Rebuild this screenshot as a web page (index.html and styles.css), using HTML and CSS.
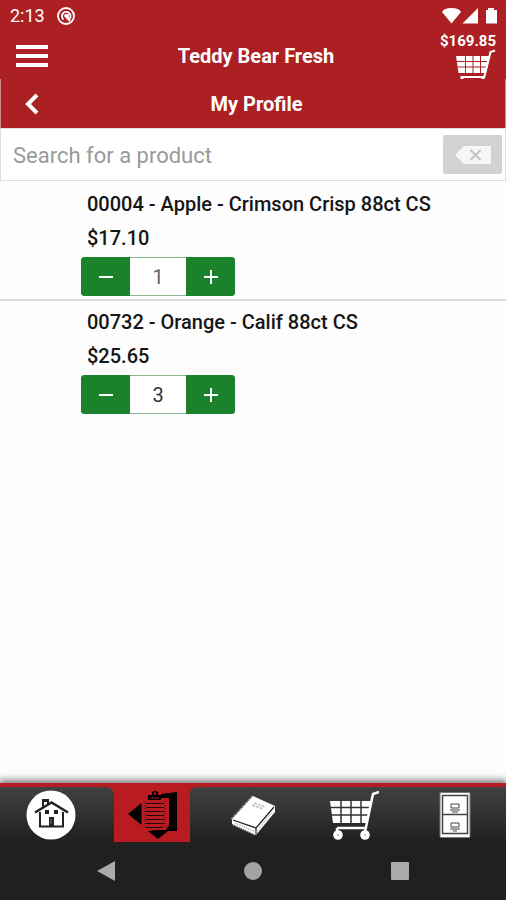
FILE: index.html
```html
<!DOCTYPE html>
<html lang="en">
<head>
<meta charset="utf-8">
<meta name="viewport" content="width=device-width, initial-scale=1">
<title>Teddy Bear Fresh</title>
<link rel="stylesheet" href="styles.css">
</head>
<body>
<svg class="sprite" aria-hidden="true">
  <symbol id="minus" viewBox="0 0 16 16"><path d="M1 8H15" stroke="currentColor" stroke-width="2"/></symbol>
  <symbol id="plus" viewBox="0 0 16 16"><path d="M1 8H15M8 1V15" stroke="currentColor" stroke-width="2"/></symbol>
</svg>
<header class="top">
  <div class="status">
    <span class="time">2:13</span>
    <svg width="18" height="18" viewBox="0 0 18 18" fill="none" stroke="#fff"><circle cx="9" cy="9" r="8" stroke-width="1.800"/><path d="M6.500 12.500A4.300 4.300 0 1 1 12.500 12" stroke-width="1.800"/><path d="M7.500 8L13 14" stroke-width="2"/><path d="M8.500 7.500h3v3z" fill="#fff"/></svg>
    <svg class="signals" width="56" height="18" viewBox="0 0 56 18" fill="#fff"><path d="M0 5Q2 1 9.500 1T19 5L9.500 16.500z"/><path d="M36 1V16.500H20.500z"/><path d="M46 1h6v2h3v13.500H44V3h2z"/></svg>
  </div>
  <div class="brand">
    <button class="plain" aria-label="Menu"><svg width="32" height="22" viewBox="0 0 32 22"><path d="M0 2H32M0 11H32M0 20H32" stroke="#fff" stroke-width="4"/></svg></button>
    <h1>Teddy Bear Fresh</h1>
    <a class="total" href="#cart"><span>$169.85</span>
      <svg width="40" height="31" viewBox="0 0 40 31" fill="none" stroke="#fff"><path d="M0 7H34L30 24H2.500z" fill="#fff" stroke="none"/><path d="M0 12.500H33M1 18H32M9.500 7V24M17 7V24M24.500 7V24" stroke="#ac2023"/><path d="M39 1.500L34.500 3L28 29M5 28H28" stroke-width="2"/><path d="M6 27v3M27 27v3" stroke-width="3"/></svg>
    </a>
  </div>
  <div class="heading">
    <button class="plain" aria-label="Back"><svg width="16" height="22" viewBox="0 0 16 22"><path d="M13 2L4 11L13 20" fill="none" stroke="#fff" stroke-width="4"/></svg></button>
    <h2>My Profile</h2>
  </div>
</header>
<form class="search">
  <input type="text" aria-label="Search for a product" placeholder="Search for a product">
  <button type="button" aria-label="Clear search"><svg width="36" height="18" viewBox="0 0 36 18"><path d="M0 9L9 0H36V18H9z" fill="#f5f6f6"/><path d="M15.500 4L25.500 14M25.500 4L15.500 14" stroke="#c2c4c4" stroke-width="2"/></svg></button>
</form>
<main>
  <article class="product">
    <h3>00004 - Apple - Crimson Crisp 88ct CS</h3>
    <p>$17.10</p>
    <div class="stepper"><button aria-label="Decrease apple quantity"><svg width="16" height="16"><use href="#minus"/></svg></button><input class="muted" type="text" value="1" aria-label="Apple quantity"><button aria-label="Increase apple quantity"><svg width="16" height="16"><use href="#plus"/></svg></button></div>
  </article>
  <article class="product">
    <h3>00732 - Orange - Calif 88ct CS</h3>
    <p>$25.65</p>
    <div class="stepper"><button aria-label="Decrease orange quantity"><svg width="16" height="16"><use href="#minus"/></svg></button><input type="text" value="3" aria-label="Orange quantity"><button aria-label="Increase orange quantity"><svg width="16" height="16"><use href="#plus"/></svg></button></div>
  </article>
</main>
<nav class="tabs" aria-label="Main">
  <a href="#home" aria-label="Home"><svg width="50" height="50" viewBox="0 0 50 50"><circle cx="25" cy="25" r="24.500" fill="#fff"/><g fill="none" stroke="#222" stroke-width="2"><path d="M14 22V36.500H37V22"/><path d="M9 22.500L25.500 12.500L42 22.500" stroke-width="2.500"/><path d="M17 17V11H22V14M16 10H23"/></g><path d="M23 27H28V36H23zM19 20h4v4h-4zM28 20h4v4h-4z" fill="#222"/><path d="M25 29v5" stroke="#777"/></svg></a>
  <a class="active" href="#profile" aria-label="My Profile"><svg width="50" height="50" viewBox="0 0 50 50"><path d="M1 24L14.500 13V35zM34 4L50 2V41H41L31 49L21 41L38 39L42 36V8H34z"/><rect x="17" y="10" width="23" height="30" rx="2" fill="#b81c20"/><g stroke="#240606" stroke-width="1.200"><path d="M19 13.500H37M19 17.500H37M19 21.500H37M19 25.500H37M19 29.500H37M19 33.500H37M19 37.500H36"/><path d="M18 12V39M38 12V39" stroke-width="1" stroke-dasharray="1 2"/></g><path d="M21 10V5H25Q24 1 28 1T31 5H34V10z"/><circle cx="28" cy="3.500" r="1.200" fill="#b81c20"/><path d="M24 8H32" stroke="#b81c20"/></svg></a>
  <a href="#catalog" aria-label="Catalog"><svg width="50" height="50" viewBox="0 0 50 50"><path d="M4 29L25 6L47 16V22L28 45L4 34z" fill="#fff"/><path d="M5 30L28 38L46 17M28 38V44" fill="none" stroke="#222" stroke-width="1.200"/><path d="M3 29L24 6M5 35L27 45" stroke="#ddd" stroke-dasharray="1 1"/><path d="M7 33L28 42L45 21" fill="none" stroke="#999" stroke-dasharray="1 1"/><path d="M26 13L37 17M24 15L35 19" stroke="#bbb" stroke-width="1.500" stroke-dasharray="3 1"/></svg></a>
  <a href="#cart" aria-label="Cart"><svg width="50" height="50" viewBox="0 0 50 50" fill="none" stroke="#fff"><path d="M1 11H42L38 33H4z" fill="#fff" stroke="none"/><path d="M0 17.500H42M2 25H41M12 10V34M22 10V34M32 10V34" stroke="#333" stroke-width="1.500"/><path d="M50 2L44 4L36 42M8 38H37M8 38V44" stroke-width="2.500"/><circle cx="9" cy="45" r="4.800" fill="#fff" stroke="none"/><circle cx="36" cy="45" r="4.800" fill="#fff" stroke="none"/><path d="M8 45h2M35 45h2" stroke="#999"/></svg></a>
  <a href="#orders" aria-label="Orders"><svg width="50" height="50" viewBox="0 0 50 50"><rect x="10" y="2.500" width="30" height="45" rx="1" fill="#fff" stroke="#777"/><path d="M12.500 5.500H37.500V43.500H12.500zM13 24.500H37" fill="none" stroke="#444" stroke-width="1.500"/><g fill="none" stroke="#444"><path d="M21 14H29V18H21zM20 20H30M22 22H28M21 33H29V37H21zM20 39H30M23 41H27"/></g></svg></a>
</nav>
<footer class="system">
  <button class="plain" aria-label="System back"><svg width="20" height="22" viewBox="0 0 20 22"><path d="M1 11L19 1V21z" fill="#aaa"/></svg></button>
  <button class="plain" aria-label="System home"><svg width="20" height="20" viewBox="0 0 20 20"><circle cx="10" cy="10" r="9" fill="#a3a3a3"/></svg></button>
  <button class="plain" aria-label="Recent apps"><svg width="20" height="20" viewBox="0 0 20 20"><rect x="1" y="1" width="18" height="18" rx="1" fill="#aaa"/></svg></button>
</footer>
</body>
</html>
```
FILE: styles.css
```css
* { box-sizing: border-box; }
body {
  margin: 0;
  min-height: 100vh;
  display: flex;
  flex-direction: column;
  background: #fdfdfd;
  color: #161616;
  font-family: Roboto, "Liberation Sans", sans-serif;
}
h1, h2, h3, p { margin: 0; }
svg { display: block; flex: none; }
button, input { font: inherit; }
.sprite { position: absolute; width: 0; height: 0; }
.plain { padding: 0; border: 0; background: none; }

.top { background: #ac2023; color: #fff; }
.status { display: flex; align-items: center; gap: 12px; height: 31px; padding: 0 8px 0 10px; }
.time { font-size: 18px; }
.signals { margin-left: auto; }
.brand {
  display: grid;
  grid-template-columns: 1fr auto 1fr;
  align-items: center;
  height: 48px;
  padding: 0 10px 0 16px;
}
.brand h1, .heading h2 { font-size: 20px; line-height: 24px; font-weight: 700; }
.brand .plain { justify-self: start; }
.total {
  display: flex;
  flex-direction: column;
  align-items: flex-end;
  align-self: start;
  justify-self: end;
  padding-top: 2px;
  color: #fff;
  font-size: 15px;
  line-height: 16px;
  font-weight: 700;
  text-decoration: none;
}
.heading {
  display: grid;
  grid-template-columns: 1fr auto 1fr;
  align-items: center;
  height: 49px;
  padding: 0 16px 0 23px;
  border: solid #d08a8c;
  border-width: 0 1px;
}

.search {
  display: flex;
  align-items: center;
  height: 53px;
  padding: 0 3px 0 12px;
  background: #fff;
  border: 1px solid #ddd;
}
.search input {
  flex: 1;
  min-width: 0;
  padding: 2px 0 0;
  border: 0;
  outline: 0;
  background: none;
  font-size: 22px;
}
.search input::placeholder { color: #999; opacity: 1; }
.search button {
  display: grid;
  place-items: center;
  width: 59px;
  height: 39px;
  padding: 0;
  border: 0;
  border-radius: 2px;
  background: #d1d3d3;
}

main { flex: 1; }
.product { padding: 6px 16px 3px 81px; }
.product + .product { padding-top: 4px; border-top: 2px solid #ddd; }
.product h3, .product p { padding-left: 6px; font-size: 20px; line-height: 34px; font-weight: 500; }
.stepper {
  display: flex;
  width: 154px;
  height: 39px;
  margin-top: 2px;
  border-radius: 4px;
  background: #1b812b;
}
.stepper button {
  display: grid;
  place-items: center;
  width: 49px;
  padding: 0;
  border: 0;
  border-radius: 4px;
  background: #1b812b;
  color: #fff;
}
.stepper input {
  flex: 1;
  min-width: 0;
  padding: 0;
  border: solid #8cbb93;
  border-width: 1px 0;
  background: #fff;
  color: #333;
  font-size: 20px;
  text-align: center;
}
.stepper .muted { color: #666; }

.tabs {
  display: grid;
  grid-template-columns: repeat(5, 1fr);
  height: 59px;
  border-top: 4px solid #b81c20;
  background: linear-gradient(#424242, #202020);
  box-shadow: 0 -2px 7px 1px #777;
}
.tabs a { display: grid; justify-items: center; align-items: center; }
.tabs .active {
  margin: 0 6px;
  background:
    radial-gradient(circle at 0 100%, transparent 6px, #b81c20 7px) left top / 7px 7px no-repeat,
    radial-gradient(circle at 100% 100%, transparent 6px, #b81c20 7px) right top / 7px 7px no-repeat,
    linear-gradient(#b81c20, #b81c20) center / calc(100% - 13px) 100% no-repeat;
}
.system {
  display: grid;
  grid-template-columns: repeat(3, 147px);
  justify-content: center;
  align-items: center;
  justify-items: center;
  height: 58px;
  background: #202020;
}
```
